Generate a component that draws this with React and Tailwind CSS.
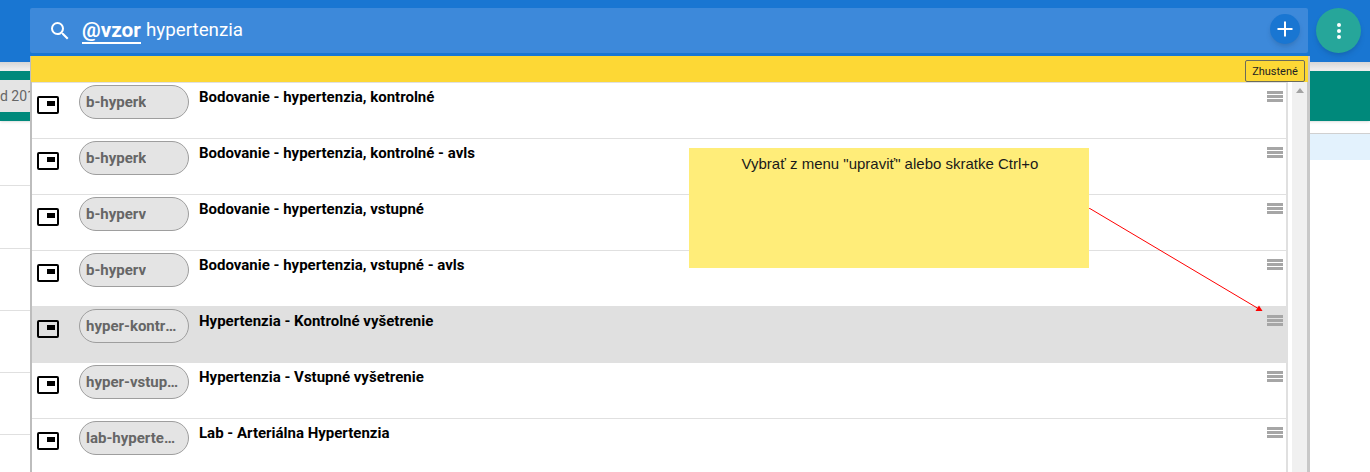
import React from "react";

const rows = [
  { tag: "b-hyperk", title: "Bodovanie - hypertenzia, kontrolné" },
  { tag: "b-hyperk", title: "Bodovanie - hypertenzia, kontrolné - avls" },
  { tag: "b-hyperv", title: "Bodovanie - hypertenzia, vstupné" },
  { tag: "b-hyperv", title: "Bodovanie - hypertenzia, vstupné - avls" },
  { tag: "hyper-kontrolne", title: "Hypertenzia - Kontrolné vyšetrenie", active: true },
  { tag: "hyper-vstupne", title: "Hypertenzia - Vstupné vyšetrenie" },
  { tag: "lab-hypertenzia", title: "Lab - Arteriálna Hypertenzia" },
];

const TemplateIcon = () => (
  <span className="mt-[13px] ml-[5px] w-[22px] h-[18px] shrink-0 rounded-[2px] border-2 border-black flex justify-end items-start pt-[3px] pr-[2px]">
    <span className="block w-[8px] h-[5px] bg-black" />
  </span>
);

const DragHandle = () => (
  <div className="absolute top-[8px] right-[3px] w-4 flex flex-col gap-[1px]">
    <span className="block h-[3px] bg-[#a6a6a6]" />
    <span className="block h-[3px] bg-[#a6a6a6]" />
    <span className="block h-[3px] bg-[#a6a6a6]" />
  </div>
);

const Row = ({ tag, title, active }) => (
  <div className={`relative flex h-[56px] shrink-0 border-t border-[#e0e0e0] ${active ? "bg-[#e0e0e0]" : "bg-white"}`}>
    <TemplateIcon />
    <div className="mt-[2px] ml-[20px] w-[110px] h-[34px] shrink-0 rounded-full border border-[#9e9e9e] bg-[#e4e4e4] px-[6px] flex items-center">
      <span className="truncate text-[15px] font-bold text-[#666666]">{tag}</span>
    </div>
    <div className="ml-[10px] mt-[5px] text-[15px] font-bold leading-[18px] text-black">{title}</div>
    <DragHandle />
  </div>
);

export default function App() {
  return (
    <div className="relative h-[472px] w-[1370px] overflow-hidden bg-white font-['Roboto',sans-serif]">
      {/* pozadie za oknom */}
      <div className="h-[62px] bg-[#1976d2]" />
      <div className="h-[9px] bg-linear-to-b from-[#d6d6d6] to-[#f2f2f2]" />
      <div className="flex justify-between h-[50px] shadow-sm">
        <div className="w-[30px] flex flex-col">
          <div className="h-[9px] bg-[#00897b]" />
          <div className="h-[32px] bg-[#e4e4e4] text-sm text-[#666666] leading-[32px] whitespace-nowrap">d 201</div>
          <div className="h-[9px] bg-[#00897b]" />
        </div>
        <div className="w-[60px] bg-[#00897b]" />
      </div>
      <div className="flex justify-between">
        <div className="w-[30px] flex flex-col">
          <div className="h-[65px] border-b border-[#e0e0e0]" />
          <div className="h-[63px] border-b border-[#e0e0e0]" />
          <div className="h-[62px] border-b border-[#e0e0e0]" />
          <div className="h-[62px] border-b border-[#e0e0e0]" />
          <div className="h-[62px] border-b border-[#e0e0e0]" />
        </div>
        <div className="w-[60px]">
          <div className="h-[13px] border-b border-[#d0d0d0]" />
          <div className="h-[26px] bg-[#e3f2fd]" />
        </div>
      </div>

      {/* vyhladavanie */}
      <div className="absolute left-[30px] top-[8px] w-[1278px] h-[45px] rounded-[2px] bg-[#3d89da] flex items-center pl-[18px] pr-[8px]">
        <svg width="24" height="24" viewBox="0 0 24 24" fill="white">
          <path d="M15.5 14h-.79l-.28-.27A6.47 6.47 0 0 0 16 9.5 6.5 6.5 0 1 0 9.5 16c1.61 0 3.09-.59 4.23-1.57l.27.28v.79l5 4.99L20.49 19l-4.99-5zm-6 0C7.01 14 5 11.99 5 9.5S7.01 5 9.5 5 14 7.01 14 9.5 11.99 14 9.5 14z" />
        </svg>
        <span className="ml-[10px] text-[20.8px] font-bold text-white border-b-2 border-white leading-[24px]">@vzor</span>
        <span className="ml-[5px] text-[18.8px] text-white">hypertenzia</span>
        <div className="ml-auto mb-[3px] w-[30px] h-[30px] rounded-full bg-[#1976d2] shadow-md flex items-center justify-center">
          <svg width="20" height="20" viewBox="0 0 20 20" stroke="white" strokeWidth="2">
            <path d="M10 2.5v15M2.5 10h15" />
          </svg>
        </div>
      </div>

      {/* menu */}
      <button className="absolute left-[1316px] top-[8px] w-[45px] h-[45px] rounded-full bg-[#26a69a] shadow-md flex flex-col items-center justify-center gap-[2px]">
        <span className="block w-1 h-1 rounded-full bg-white" />
        <span className="block w-1 h-1 rounded-full bg-white" />
        <span className="block w-1 h-1 rounded-full bg-white" />
      </button>

      {/* zoznam vzorov */}
      <div className="absolute left-[30px] top-[56px] w-[1280px] h-[416px] bg-white border-l-2 border-r-[3px] border-l-[#bdbdbd] border-r-[#c8c8c8] flex flex-col">
        <div className="h-[26px] -mx-[1px] shrink-0 bg-[#fdd835] flex items-start justify-end pt-[4px] pr-[3px]">
          <button className="h-[22px] w-[60px] rounded-[2px] border border-[#6b6b5a] text-[11px] leading-none text-[#222222]">Zhustené</button>
        </div>
        <div className="flex flex-1 min-h-0">
          <div className="w-[1256px] border-r-2 border-[#e0e0e0] flex flex-col overflow-hidden">
            {rows.map((row) => (
              <Row key={row.title} {...row} />
            ))}
          </div>
          <div className="ml-[4px] flex-1 bg-[#f0f0f0] flex justify-center pt-[6px]">
            <span className="w-0 h-0 border-x-[4px] border-x-transparent border-b-[5px] border-b-[#a3a3a3]" />
          </div>
        </div>
      </div>

      {/* poznamka */}
      <div className="absolute left-[689px] top-[148px] w-[400px] h-[120px] bg-[#ffed79] pt-[5px] pl-[2px] text-center font-['Liberation_Sans',sans-serif] text-[15px] text-[#1a1a1a]">
        Vybrať z menu "upraviť" alebo skratke Ctrl+o
      </div>

      {/* sipka */}
      <svg className="absolute left-[1089px] top-[208px]" width="175" height="104" viewBox="0 0 175 104">
        <path d="M0 0L170 101" stroke="#f00" strokeWidth="1" fill="none" />
        <path d="M173.5 103L166.5 103L170 97.5z" fill="#f00" />
      </svg>
    </div>
  );
}
